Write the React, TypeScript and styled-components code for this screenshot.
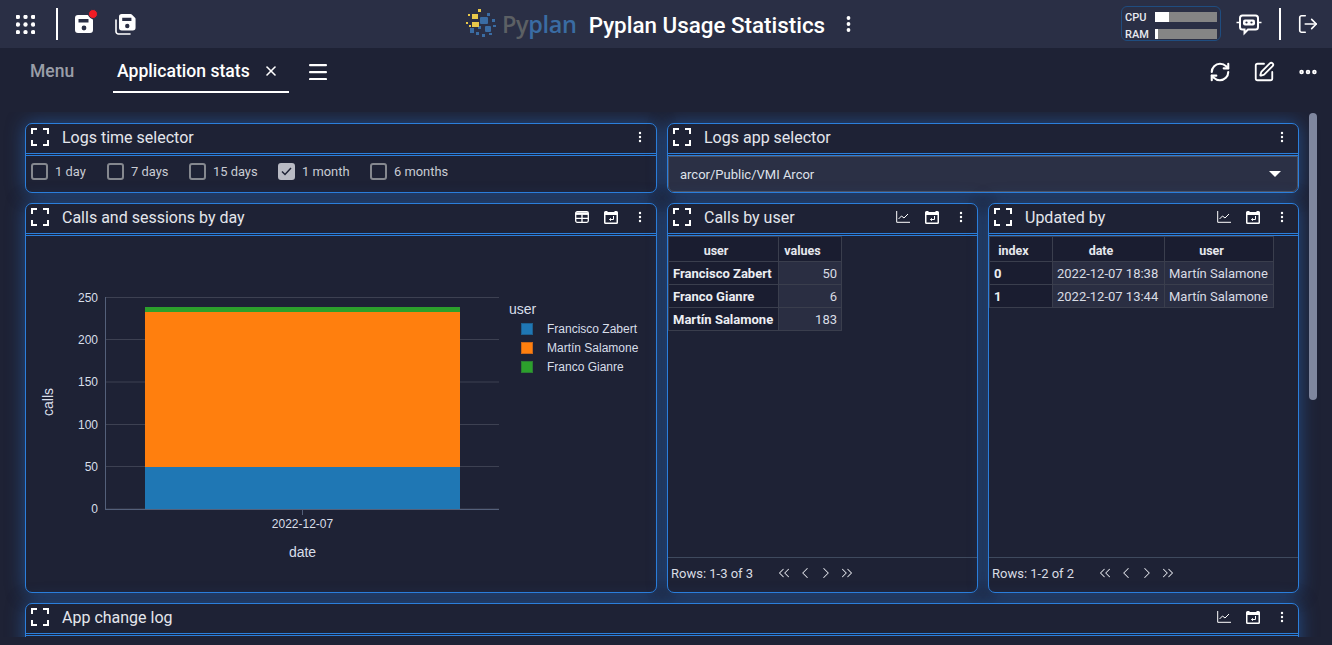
import styled, { createGlobalStyle } from "styled-components";
import { ChevronLeft, ChevronRight, ChevronsLeft, ChevronsRight, Ellipsis, LogOut, RefreshCw, SquarePen, X } from "lucide-react";

const GlobalStyle = createGlobalStyle`
    html, body {
        margin: 0;
        height: 100%;
        overflow: hidden;
        background: #1e2235;
    }
    * {
        box-sizing: border-box;
    }
    body {
        font-family: Roboto, "Liberation Sans", sans-serif;
        color: #e6e8ee;
    }
`;

const Page = styled.div`
    display: flex;
    flex-direction: column;
    height: 645px;
`;

const TopBar = styled.header`
    display: flex;
    align-items: center;
    justify-content: space-between;
    height: 48px;
    flex: none;
    background: #2a2f45;
    position: relative;
`;

const TopGroup = styled.div`
    display: flex;
    align-items: center;
`;

const TopCenter = styled.div`
    display: flex;
    align-items: center;
    position: absolute;
    left: 465px;
    top: 0;
    height: 48px;
`;

const Divider = styled.div`
    width: 2px;
    height: 32px;
    background: #ffffff;
`;

const IconSlot = styled.div<{ $w: number; $ml?: number }>`
    display: flex;
    align-items: center;
    justify-content: center;
    width: ${(p) => p.$w}px;
    margin-left: ${(p) => p.$ml ?? 0}px;
    flex: none;
    color: #ffffff;
`;

const LogoText = styled.span`
    font-family: "Open Sans", sans-serif;
    font-size: 23.5px;
    font-weight: 600;
    letter-spacing: -0.35px;
    margin-left: 5px;
    color: #5c6064;
    & b {
        font-weight: 600;
        color: #3a6ca3;
    }
`;

const AppTitle = styled.div`
    font-size: 22.4px;
    font-weight: 500;
    color: #ffffff;
    margin-left: 12px;
    padding-top: 2px;
`;

const Meter = styled.div`
    display: grid;
    grid-template-columns: 30px 62px;
    grid-auto-rows: 10px;
    align-items: center;
    align-content: start;
    row-gap: 7px;
    width: 100px;
    height: 35px;
    padding: 5px 3px 0;
    margin-top: -1px;
    border: 1px solid #1f4d80;
    border-radius: 6px;
    font-size: 11px;
    font-weight: 500;
    color: #e8eaf0;
`;

const MeterBar = styled.div`
    height: 10px;
    background: #858585;
`;

const MeterFill = styled.div`
    height: 100%;
    background: #ffffff;
`;

const TabBar = styled.nav`
    display: flex;
    align-items: center;
    height: 64px;
    flex: none;
    padding: 0 13px 16px 30px;
    background: #1e2235;
`;

const MenuTab = styled.div`
    font-size: 17.5px;
    font-weight: 500;
    color: #9a9ea8;
    width: 83px;
    padding-bottom: 2px;
`;

const ActiveTab = styled.div`
    display: flex;
    align-items: center;
    justify-content: space-between;
    width: 176px;
    height: 41px;
    padding: 0 10px 0 4px;
    border-bottom: 2px solid #ffffff;
    font-size: 17.6px;
    font-weight: 500;
    color: #ffffff;
`;

const TabTools = styled.div`
    display: flex;
    align-items: center;
    margin-left: auto;
    gap: 22px;
    color: #ffffff;
`;

const Scroller = styled.main`
    position: relative;
    height: 525px;
    flex: none;
    overflow: hidden;
    padding: 11px 33px 0 25px;
`;

const Thumb = styled.div`
    position: absolute;
    right: 15px;
    top: 1px;
    width: 8px;
    height: 287px;
    border-radius: 4px;
    background: #7f879f;
`;

const Board = styled.div`
    display: grid;
    grid-template-columns: repeat(4, 1fr);
    grid-template-rows: 70px 390px 200px;
    gap: 10px;
`;

const Panel = styled.section<{ $span: number }>`
    grid-column: span ${(p) => p.$span};
    display: flex;
    flex-direction: column;
    min-width: 0;
    background: #1e2235;
    border: 1px solid #2b7fdc;
    border-radius: 7px;
    box-shadow: 0 0 18px rgba(43, 120, 215, 0.5);
`;

const PanelHead = styled.div`
    display: flex;
    align-items: center;
    height: 32px;
    flex: none;
    padding: 0 2px 3px 5px;
    border-bottom: 3px double #2b7fdc;
`;

const PanelTitle = styled.div`
    font-size: 16px;
    color: #e4e6ec;
    margin-left: 13px;
    flex: 1;
`;

const HeadTool = styled.div`
    display: flex;
    align-items: center;
    justify-content: center;
    width: 29px;
    color: #ffffff;
`;

const Options = styled.div`
    display: flex;
    align-items: center;
    flex: 1;
    padding: 0 0 6px 5px;
`;

const Option = styled.label<{ $w: number }>`
    display: flex;
    align-items: center;
    gap: 7px;
    width: ${(p) => p.$w}px;
    font-size: 12.9px;
    color: #c9ccd4;
`;

const Check = styled.span<{ $on?: boolean }>`
    display: flex;
    align-items: center;
    justify-content: center;
    width: 17px;
    height: 17px;
    border: 2px solid ${(p) => (p.$on ? "#b9bbc4" : "#85888f")};
    border-radius: 3px;
    background: ${(p) => (p.$on ? "#b9bbc4" : "transparent")};
`;

const Select = styled.div`
    display: flex;
    align-items: center;
    justify-content: space-between;
    flex: 1;
    padding: 0 16px 0 11px;
    background: #2b3045;
    border: 1px solid #4d5262;
    border-radius: 0 0 6px 6px;
    font-size: 13px;
    color: #dfe2ea;
`;

const Caret = styled.div`
    width: 0;
    height: 0;
    border-left: 6px solid transparent;
    border-right: 6px solid transparent;
    border-top: 6px solid #ffffff;
`;

const ChartBody = styled.div`
    flex: 1;
    min-height: 0;
`;

const TableBody = styled.div`
    flex: 1;
    min-height: 0;
`;

const Table = styled.table<{ $w: number }>`
    width: ${(p) => p.$w}px;
    table-layout: fixed;
    border-collapse: collapse;
    font-size: 13px;
`;

const HeadCell = styled.th`
    height: 25px;
    padding: 2px 15px 0 0;
    background: #1a1d30;
    border: 1px solid #3a3e4d;
    font-size: 12.5px;
    font-weight: 700;
    color: #e6e8ee;
    text-align: center;
`;

const RowHead = styled.th`
    height: 23px;
    padding: 0 0 0 4px;
    background: #1a1d30;
    border: 1px solid #3a3e4d;
    font-weight: 700;
    color: #eceef3;
    text-align: left;
    white-space: nowrap;
`;

const Cell = styled.td<{ $right?: boolean }>`
    height: 23px;
    padding: 0 4px;
    background: #2a2e42;
    border: 1px solid #3a3e4d;
    color: #d9dce4;
    text-align: ${(p) => (p.$right ? "right" : "left")};
    white-space: nowrap;
`;

const Pager = styled.div`
    display: flex;
    align-items: center;
    height: 35px;
    flex: none;
    padding: 0 0 4px 3px;
    border-top: 1px solid #3f4a5e;
    font-size: 13px;
    color: #d9dce4;
`;

const PagerText = styled.span`
    width: 102px;
`;

const PagerButton = styled.span`
    display: flex;
    justify-content: center;
    width: 21px;
    color: #e0e2e8;
`;

const GridIcon = () => (
    <svg width="19" height="19" viewBox="0 0 20 20" fill="#fff">
        {[2, 10, 18].flatMap((y) => [2, 10, 18].map((x) => <circle key={`${x}-${y}`} cx={x} cy={y} r="2.300" />))}
    </svg>
);

const saveBody =
    "M3 0h9.5a2 2 0 0 1 1.4.6l3.5 3.5a2 2 0 0 1 .6 1.4V15a3 3 0 0 1-3 3H3a3 3 0 0 1-3-3V3a3 3 0 0 1 3-3zM3.5 4v3.5h10V4zM9 10.6a2.4 2.4 0 1 0 0 4.8 2.4 2.4 0 0 0 0-4.8z";

const SaveIcon = () => (
    <svg width="20" height="20" viewBox="0 0 20 20" overflow="visible">
        <path transform="translate(0 1)" d={saveBody} fill="#fff" fillRule="evenodd" />
        <circle cx="18" cy="0" r="4.500" fill="#f01c24" stroke="#2a2f45" strokeWidth="1" />
    </svg>
);

const SaveAllIcon = () => (
    <svg width="21" height="21" viewBox="0 0 21 21">
        <path transform="translate(4 0) scale(0.92)" d={saveBody} fill="#fff" fillRule="evenodd" />
        <path d="M1 6v11.5A2.5 2.5 0 0 0 3.500 20H15" fill="none" stroke="#fff" strokeWidth="1.600" strokeLinecap="round" />
    </svg>
);

const LogoIcon = () => (
    <svg width="32" height="30" viewBox="0 0 32 30">
        <g fill="#3a6ca3">
            <rect x="15" y="8" width="8" height="7" rx="1" />
            <rect x="20" y="17" width="6" height="6" rx="1" />
            <rect x="5" y="19" width="4" height="5" />
            <rect x="11" y="23" width="3" height="3" />
            <rect x="17" y="25" width="3" height="3" />
            <rect x="22" y="4" width="3" height="3" />
            <rect x="27" y="10" width="3" height="3" />
            <rect x="28" y="16" width="3" height="2" />
            <rect x="13" y="17" width="3" height="3" />
            <rect x="24" y="24" width="3" height="2" />
        </g>
        <g fill="#e8c84a">
            <rect x="7" y="5" width="6" height="5" />
            <rect x="13" y="0" width="3" height="3" />
            <rect x="7" y="13" width="7" height="5" />
            <rect x="1" y="13" width="2" height="2" />
            <rect x="3" y="5" width="2" height="2" />
            <rect x="4" y="16" width="2" height="2" />
        </g>
    </svg>
);

const BotIcon = () => (
    <svg width="26" height="24" viewBox="0 -1.500 26 24" fill="none" stroke="#fff">
        <path d="M6.500 2h13a2.500 2.500 0 0 1 2.500 2.500v9a2.500 2.500 0 0 1-2.500 2.500H12l-3.500 3.500V16h-2A2.500 2.500 0 0 1 4 13.500v-9A2.500 2.500 0 0 1 6.500 2z" strokeWidth="2" />
        <rect x="7" y="6" width="12" height="6" rx="2" fill="#fff" stroke="none" />
        <circle cx="10.500" cy="9" r="1.100" fill="#2a2f45" stroke="none" />
        <circle cx="15.500" cy="9" r="1.100" fill="#2a2f45" stroke="none" />
        <path d="M0.500 9h3M22.500 9h3" strokeWidth="1.500" />
    </svg>
);

const BurgerIcon = () => (
    <svg width="18" height="16" viewBox="0 0 18 16" fill="#fff">
        <rect y="0" width="18" height="2.200" rx="1" />
        <rect y="7" width="18" height="2.200" rx="1" />
        <rect y="14" width="18" height="2.200" rx="1" />
    </svg>
);

const ExpandIcon = () => (
    <svg width="18" height="18" viewBox="0 0 18 18" fill="none" stroke="#fff" strokeWidth="2">
        <path d="M1 6V1h5M12 1h5v5M17 12v5h-5M6 17H1v-5" />
    </svg>
);

const KebabIcon = () => (
    <svg width="4" height="12" viewBox="0 0 4 12" fill="#fff">
        <circle cx="2" cy="2" r="1.200" />
        <circle cx="2" cy="6" r="1.200" />
        <circle cx="2" cy="10" r="1.200" />
    </svg>
);

const TallKebab = () => (
    <svg width="5" height="18" viewBox="0 0 5 18" fill="#fff">
        <circle cx="2.500" cy="3" r="1.900" />
        <circle cx="2.500" cy="9" r="1.900" />
        <circle cx="2.500" cy="15" r="1.900" />
    </svg>
);

const TableIcon = () => (
    <svg width="14" height="12" viewBox="0 0 14 12" fill="none" stroke="#fff" strokeWidth="1.300">
        <rect x="0.700" y="0.700" width="12.600" height="10.600" rx="1.500" />
        <path d="M0.700 2.600h12.600" strokeWidth="2.600" />
        <path d="M0.700 7.400h12.600M7 3.500v8" />
    </svg>
);

const LineIcon = () => (
    <svg width="14" height="12" viewBox="0 0 14 12" fill="none" stroke="#fff">
        <path d="M0.700 0v11.300H14" strokeWidth="1" />
        <path d="M2.500 8l3-3 2.500 2 4-4" strokeWidth="1" />
    </svg>
);

const WindowIcon = () => (
    <svg width="14" height="13" viewBox="0 0 14 13">
        <path
            d="M1.500 0h2v1h7V0h2A1.500 1.500 0 0 1 14 1.500v10a1.500 1.500 0 0 1-1.500 1.500h-11A1.500 1.500 0 0 1 0 11.500v-10A1.500 1.500 0 0 1 1.500 0zM1.500 4v7.500h11V4z"
            fill="#fff"
            fillRule="evenodd"
        />
        <path d="M9.500 5v3.500H5.500M6.800 7.200L5.500 8.500l1.300 1.300" fill="none" stroke="#fff" strokeWidth="1" />
    </svg>
);

const yTicks = [
    { y: 297.5, label: "250" },
    { y: 339.5, label: "200" },
    { y: 382, label: "150" },
    { y: 424.5, label: "100" },
    { y: 466.5, label: "50" },
    { y: 509, label: "0" },
];

const legend = [
    { color: "#1f77b4", border: "#1d5f8e", label: "Francisco Zabert", y: 323 },
    { color: "#ff7f0e", border: "#c9661a", label: "Martín Salamone", y: 342 },
    { color: "#2ca02c", border: "#2b7d33", label: "Franco Gianre", y: 361 },
];

const Chart = () => (
    <svg width="630" height="356" viewBox="26 236 630 356" fontFamily="'Liberation Sans', sans-serif" fill="#d8dee9" fontSize="12">
        {yTicks.map((t) => (
            <g key={t.label}>
                <line x1="105" x2="499" y1={t.y} y2={t.y} stroke="#3d4152" />
                <text x="98" y={t.y + 4} textAnchor="end">
                    {t.label}
                </text>
            </g>
        ))}
        <rect x="145" y="307" width="315" height="5" fill="#2ca02c" />
        <rect x="145" y="312" width="315" height="155" fill="#ff7f0e" />
        <rect x="145" y="467" width="315" height="42" fill="#1f77b4" />
        <line x1="105.500" x2="105.500" y1="297" y2="509.500" stroke="#54607a" />
        <line x1="105" x2="499" y1="509.500" y2="509.500" stroke="#54607a" />
        <line x1="302.500" x2="302.500" y1="510" y2="515" stroke="#54607a" />
        <text x="302.500" y="528" textAnchor="middle">
            2022-12-07
        </text>
        <text x="302.500" y="557" textAnchor="middle" fontSize="14">
            date
        </text>
        <text transform="translate(53 402) rotate(-90)" textAnchor="middle" fontSize="14">
            calls
        </text>
        <text x="509" y="314" fontSize="14">
            user
        </text>
        {legend.map((l) => (
            <g key={l.label}>
                <rect x="521.500" y={l.y + 0.5} width="11" height="11" fill={l.color} stroke={l.border} />
                <text x="547" y={l.y + 10}>
                    {l.label}
                </text>
            </g>
        ))}
    </svg>
);

const timeOptions = [
    { label: "1 day", w: 76 },
    { label: "7 days", w: 82 },
    { label: "15 days", w: 89 },
    { label: "1 month", w: 92, on: true },
    { label: "6 months", w: 100 },
];

const callsByUser = [
    { user: "Francisco Zabert", values: 50 },
    { user: "Franco Gianre", values: 6 },
    { user: "Martín Salamone", values: 183 },
];

const updates = [
    { date: "2022-12-07 18:38", user: "Martín Salamone" },
    { date: "2022-12-07 13:44", user: "Martín Salamone" },
];

const PanelHeader = ({ title, tools = [] }: { title: string; tools?: React.ReactNode[] }) => (
    <PanelHead>
        <ExpandIcon />
        <PanelTitle>{title}</PanelTitle>
        {tools.map((tool, i) => (
            <HeadTool key={i}>{tool}</HeadTool>
        ))}
        <HeadTool>
            <KebabIcon />
        </HeadTool>
    </PanelHead>
);

const PagerRow = ({ text }: { text: string }) => (
    <Pager>
        <PagerText>{text}</PagerText>
        <PagerButton>
            <ChevronsLeft size={18} strokeWidth={1.4} />
        </PagerButton>
        <PagerButton>
            <ChevronLeft size={18} strokeWidth={1.4} />
        </PagerButton>
        <PagerButton>
            <ChevronRight size={18} strokeWidth={1.4} />
        </PagerButton>
        <PagerButton>
            <ChevronsRight size={18} strokeWidth={1.4} />
        </PagerButton>
    </Pager>
);

const App = () => {
    return (
        <Page>
            <GlobalStyle />
            <TopBar>
                <TopGroup>
                    <IconSlot $w={20} $ml={15}>
                        <GridIcon />
                    </IconSlot>
                    <IconSlot $w={2} $ml={21}>
                        <Divider />
                    </IconSlot>
                    <IconSlot $w={20} $ml={17}>
                        <SaveIcon />
                    </IconSlot>
                    <IconSlot $w={21} $ml={20}>
                        <SaveAllIcon />
                    </IconSlot>
                </TopGroup>
                <TopCenter>
                    <LogoIcon />
                    <LogoText>
                        Py<b>plan</b>
                    </LogoText>
                    <AppTitle>Pyplan Usage Statistics</AppTitle>
                    <IconSlot $w={5} $ml={21}>
                        <TallKebab />
                    </IconSlot>
                </TopCenter>
                <TopGroup>
                    <Meter>
                        <span>CPU</span>
                        <MeterBar>
                            <MeterFill style={{ width: "23%" }} />
                        </MeterBar>
                        <span>RAM</span>
                        <MeterBar>
                            <MeterFill style={{ width: "5%" }} />
                        </MeterBar>
                    </Meter>
                    <IconSlot $w={26} $ml={15}>
                        <BotIcon />
                    </IconSlot>
                    <IconSlot $w={2} $ml={17}>
                        <Divider />
                    </IconSlot>
                    <IconSlot $w={22} $ml={16}>
                        <LogOut size={22} strokeWidth={1.8} />
                    </IconSlot>
                    <IconSlot $w={13} />
                </TopGroup>
            </TopBar>
            <TabBar>
                <MenuTab>Menu</MenuTab>
                <ActiveTab>
                    Application stats
                    <X size={16} strokeWidth={2.4} />
                </ActiveTab>
                <IconSlot $w={18} $ml={20}>
                    <BurgerIcon />
                </IconSlot>
                <TabTools>
                    <RefreshCw size={22} strokeWidth={2.3} />
                    <SquarePen size={22} strokeWidth={2} />
                    <Ellipsis size={22} strokeWidth={3} />
                </TabTools>
            </TabBar>
            <Scroller>
                <Board>
                    <Panel $span={2}>
                        <PanelHeader title="Logs time selector" />
                        <Options>
                            {timeOptions.map((o) => (
                                <Option key={o.label} $w={o.w}>
                                    <Check $on={o.on}>
                                        {o.on && (
                                            <svg width="11" height="9" viewBox="0 0 11 9" fill="none" stroke="#1e2235" strokeWidth="1.500">
                                                <path d="M1 4.500l3 3 6-6.500" />
                                            </svg>
                                        )}
                                    </Check>
                                    {o.label}
                                </Option>
                            ))}
                        </Options>
                    </Panel>
                    <Panel $span={2}>
                        <PanelHeader title="Logs app selector" />
                        <Select>
                            arcor/Public/VMI Arcor
                            <Caret />
                        </Select>
                    </Panel>
                    <Panel $span={2}>
                        <PanelHeader title="Calls and sessions by day" tools={[<TableIcon />, <WindowIcon />]} />
                        <ChartBody>
                            <Chart />
                        </ChartBody>
                    </Panel>
                    <Panel $span={1}>
                        <PanelHeader title="Calls by user" tools={[<LineIcon />, <WindowIcon />]} />
                        <TableBody>
                            <Table $w={173}>
                                <colgroup>
                                    <col width="110" />
                                    <col width="63" />
                                </colgroup>
                                <thead>
                                    <tr>
                                        <HeadCell>user</HeadCell>
                                        <HeadCell>values</HeadCell>
                                    </tr>
                                </thead>
                                <tbody>
                                    {callsByUser.map((row) => (
                                        <tr key={row.user}>
                                            <RowHead>{row.user}</RowHead>
                                            <Cell $right>{row.values}</Cell>
                                        </tr>
                                    ))}
                                </tbody>
                            </Table>
                        </TableBody>
                        <PagerRow text="Rows: 1-3 of 3" />
                    </Panel>
                    <Panel $span={1}>
                        <PanelHeader title="Updated by" tools={[<LineIcon />, <WindowIcon />]} />
                        <TableBody>
                            <Table $w={284}>
                                <colgroup>
                                    <col width="63" />
                                    <col width="112" />
                                    <col width="109" />
                                </colgroup>
                                <thead>
                                    <tr>
                                        <HeadCell>index</HeadCell>
                                        <HeadCell>date</HeadCell>
                                        <HeadCell>user</HeadCell>
                                    </tr>
                                </thead>
                                <tbody>
                                    {updates.map((row, i) => (
                                        <tr key={row.date}>
                                            <RowHead>{i}</RowHead>
                                            <Cell>{row.date}</Cell>
                                            <Cell>{row.user}</Cell>
                                        </tr>
                                    ))}
                                </tbody>
                            </Table>
                        </TableBody>
                        <PagerRow text="Rows: 1-2 of 2" />
                    </Panel>
                    <Panel $span={4}>
                        <PanelHeader title="App change log" tools={[<LineIcon />, <WindowIcon />]} />
                    </Panel>
                </Board>
                <Thumb />
            </Scroller>
        </Page>
    );
};

export default App;
